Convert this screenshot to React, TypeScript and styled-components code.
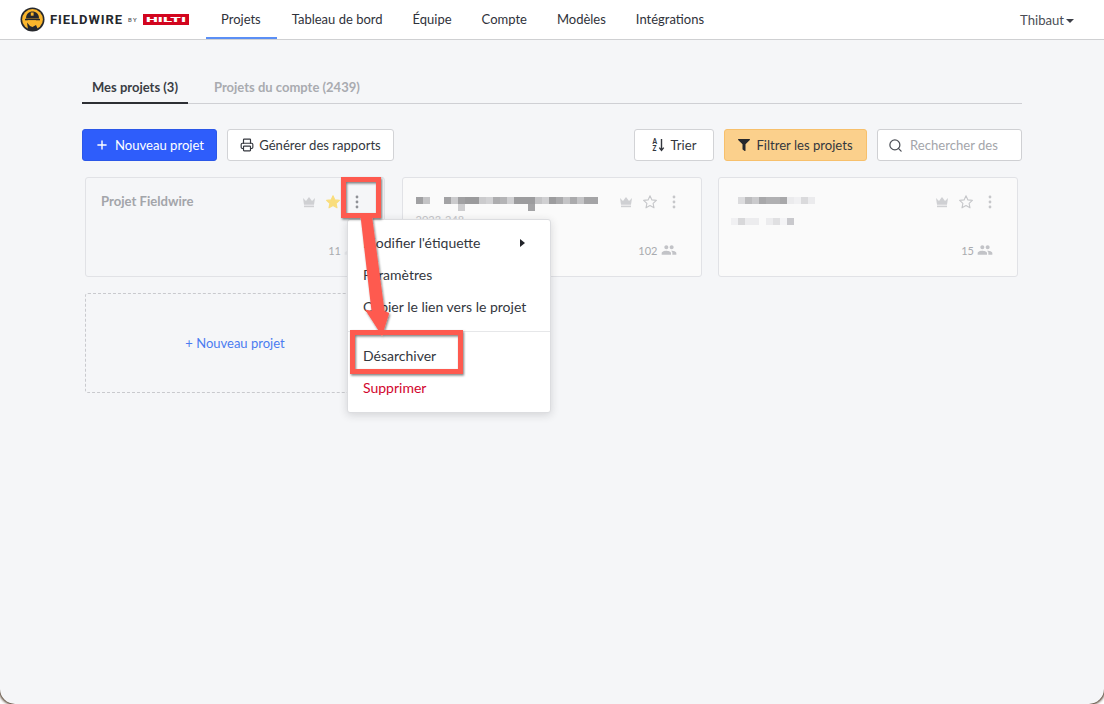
import React from 'react'
import styled, { createGlobalStyle } from 'styled-components'
import { Plus, Printer, Search } from 'lucide-react'
import { MdPeople } from 'react-icons/md'
import { FaFilter } from 'react-icons/fa'

const GlobalStyle = createGlobalStyle`
  html, body {
    margin: 0;
    background: #fff;
    overflow: hidden;
  }
  * { box-sizing: border-box; }
`

const NAV_ITEMS = ['Projets', 'Tableau de bord', 'Équipe', 'Compte', 'Modèles', 'Intégrations']

const CARD2_ROW1 = ['#a0a0a2', '#c4c4c6', 0, 0, '#a2a2a4', '#cbcbcd', '#a0a0a2', '#9a9a9c', '#9a9a9c', '#cbcbcd', '#d2d2d4', '#adadaf', '#b4b4b6', '#d0d0d2', '#9c9c9e', '#9c9c9e', '#9c9c9e', '#c4c4c6', '#d0d0d2', '#9c9c9e', '#aaaaac', '#c4c4c6', '#aaaaac', '#c4c4c6', '#a4a4a6', '#a4a4a6']
const CARD2_ROW2 = [0, 0, 0, 0, 0, 0, '#cdcdcf', 0, 0, 0, 0, 0, 0, 0, 0, 0, '#a4a4a6']
const CARD3_ROW1 = ['#dcdcde', '#bcbcbe', '#cacacc', '#a8a8aa', '#b0b0b2', '#b0b0b2', '#a8a8aa', '#ebebed', '#f0f0f2', '#dadadc', '#ebebed']
const CARD3_ROW2 = ['#f0f0f2', '#d8d8da', '#ececee', '#ececee', 0, '#ececee', '#e0e0e2', '#f4f4f6', '#c9c9cd']

const Page = styled.div`
  position: relative;
  width: 1104px;
  height: 704px;
  overflow: hidden;
  background: #f5f6f8;
  border-radius: 0 0 15px 15px;
  box-shadow: 0 0 3px 1px #2c1500;
  font-family: Lato, sans-serif;
  font-size: 13px;
  color: #34373e;
`

const Header = styled.header`
  display: flex;
  align-items: stretch;
  height: 40px;
  background: #fff;
  border-bottom: 1px solid #cfd0d2;
  padding: 0 30px 0 20px;
`

const Brand = styled.div`
  display: flex;
  align-items: center;
  width: 186px;
`

const Wordmark = styled.span`
  margin-left: 5px;
  font-family: Roboto, sans-serif;
  font-weight: 700;
  font-size: 13px;
  letter-spacing: 0.95px;
  color: #26282d;
`

const ByMark = styled.span`
  margin: 0 5px 0 5px;
  font-family: Roboto, sans-serif;
  font-size: 6px;
  font-weight: 500;
  letter-spacing: 1.2px;
  color: #55585e;
`

const Nav = styled.nav`
  display: flex;
  flex: 1;
`

const NavItem = styled.a<{ $active?: boolean }>`
  display: flex;
  align-items: center;
  height: 39px;
  padding: 0 ${(p) => (p.$active ? '16px' : '15px')} 0 15px;
  color: #2f323a;
  border-bottom: 2px solid ${(p) => (p.$active ? '#5b8ff5' : 'transparent')};
`

const UserMenu = styled.div`
  display: flex;
  align-items: center;
  gap: 2px;
  font-size: 13.1px;
  color: #4a4d55;
`

const Caret = styled.i`
  width: 0;
  height: 0;
  margin-top: 2px;
  border-left: 4px solid transparent;
  border-right: 4px solid transparent;
  border-top: 4px solid #3c3f47;
`

const Content = styled.main`
  padding: 32px 82px 0;
`

const Tabs = styled.div`
  display: flex;
  gap: 16px;
  height: 32px;
  border-bottom: 1px solid #cfd0d4;
`

const Tab = styled.div<{ $active?: boolean }>`
  height: 32px;
  padding: 0 10px;
  line-height: 31px;
  font-weight: 700;
  color: ${(p) => (p.$active ? '#3a3d44' : '#a9abb0')};
  border-bottom: ${(p) => (p.$active ? '2px solid #2d2f34' : 'none')};
`

const Toolbar = styled.div`
  display: flex;
  gap: 10px;
  margin-top: 25px;
`

const Spacer = styled.div`
  flex: 1;
`

const Button = styled.button<{ $variant?: 'primary' | 'filter'; $w: number }>`
  display: flex;
  align-items: center;
  justify-content: center;
  gap: ${(p) => (p.$variant ? '6px' : '5px')};
  height: 32px;
  width: ${(p) => p.$w}px;
  padding: 0;
  font: inherit;
  font-size: 13.1px;
  border-radius: 3px;
  border: 1px solid
    ${(p) =>
      p.$variant === 'primary' ? '#2b57e8' : p.$variant === 'filter' ? '#f7c06c' : '#d2d3d6'};
  background: ${(p) =>
    p.$variant === 'primary' ? '#2e5dfb' : p.$variant === 'filter' ? '#fbd08c' : '#fff'};
  color: ${(p) => (p.$variant === 'primary' ? '#fff' : '#34373e')};
`

const SearchBox = styled.label`
  display: flex;
  align-items: center;
  gap: 7px;
  width: 145px;
  height: 32px;
  padding: 0 10px;
  background: #fff;
  border: 1px solid #cfd0d3;
  border-radius: 3px;
`

const SearchInput = styled.input`
  flex: 1;
  min-width: 0;
  border: none;
  outline: none;
  padding: 0;
  font: inherit;
  font-size: 13.1px;
  background: transparent;
  &::placeholder {
    color: #a3a5aa;
    opacity: 1;
  }
`

const Grid = styled.div`
  display: grid;
  grid-template-columns: repeat(3, 300px);
  grid-auto-rows: 100px;
  column-gap: 16.5px;
  row-gap: 16px;
  margin: 16px 0 0 3px;
`

const Card = styled.div<{ $archived?: boolean }>`
  position: relative;
  padding: 15px 15px 0 15px;
  background: ${(p) => (p.$archived ? '#f5f6f8' : '#fafafa')};
  border: 1px solid #e1e2e6;
  border-radius: 3px;
`

const CardTop = styled.div`
  display: flex;
  justify-content: space-between;
  height: 18px;
`

const CardTitle = styled.div`
  margin-top: -1px;
  font-size: 13.1px;
  font-weight: 700;
  line-height: 18px;
  color: #a3a5aa;
`

const BlurLines = styled.div`
  display: flex;
  flex-direction: column;
  padding-top: 4px;
`

const BlurRow = styled.div<{ $offset?: number; $top?: number }>`
  display: flex;
  margin-left: ${(p) => p.$offset ?? 0}px;
  margin-top: ${(p) => p.$top ?? 0}px;
`

const BlurBlock = styled.i<{ $color: string | number }>`
  display: block;
  width: 7px;
  height: 7px;
  background: ${(p) => p.$color || 'transparent'};
`

const CardIcons = styled.div`
  display: flex;
  align-items: center;
`

const IconSlot = styled.span`
  display: flex;
  align-items: center;
  justify-content: center;
  width: 24px;
`

const CardCode = styled.div`
  margin: 3px 0 0 -2px;
  font-size: 11px;
  line-height: 12px;
  color: #c4c5c9;
`

const CardFooter = styled.div`
  position: absolute;
  right: 24px;
  bottom: 18px;
  display: flex;
  align-items: center;
  gap: 3px;
  font-size: 11px;
  color: #a9abaf;
`

const NewCard = styled.div`
  display: flex;
  align-items: center;
  justify-content: center;
  border: 1px dashed #c9cace;
  border-radius: 3px;
  color: #4b7cf0;
`

const Menu = styled.div`
  position: absolute;
  z-index: 5;
  top: 41px;
  left: 261px;
  width: 204px;
  padding: 7px 0 8px;
  background: #fff;
  border: 1px solid #dcdde0;
  border-radius: 3px;
  box-shadow: 0 2px 8px rgba(30, 33, 40, 0.16);
`

const MenuItem = styled.div<{ $danger?: boolean }>`
  display: flex;
  align-items: center;
  justify-content: space-between;
  height: 32px;
  padding: 0 25px 2px 15px;
  white-space: nowrap;
  font-size: 14px;
  color: ${(p) => (p.$danger ? '#d2042d' : '#34373e')};
`

const MenuCaret = styled.i`
  width: 0;
  height: 0;
  margin-top: 2px;
  border-top: 4.5px solid transparent;
  border-bottom: 4.5px solid transparent;
  border-left: 5px solid #22242a;
`

const MenuDivider = styled.hr`
  height: 1px;
  margin: 8px 0;
  border: none;
  background: #e6e7e9;
`

const Annotations = styled.svg`
  position: absolute;
  z-index: 10;
  top: 0;
  left: 0;
  pointer-events: none;
`

const Logo = () => (
  <svg width="25" height="25" viewBox="0 0 25 25">
    <circle cx="12.5" cy="12.5" r="12" fill="#26282d" />
    <circle cx="12.5" cy="12.5" r="10.4" fill="#fbb62c" />
    <path d="M6 11.5C6 7 9 4.6 12.5 4.6S19 7 19 11.5z" fill="#26282d" />
    <path d="M10.8 5.5h2.8v3.2h-2.8z" fill="#fbb62c" />
    <path d="M5 11.8h15v1.5H5z" fill="#26282d" />
    <path d="M7.5 13.3h8.5l-.5 4-3 1.6-2-1-1-2.2z" fill="#fbb62c" />
    <path d="M7 15.5l3 3.4 2.5 1.2 3.5-2 2 4.3c-3 1.6-7 1.6-10 0z" fill="#26282d" />
  </svg>
)

const HiltiLogo = () => (
  <svg width="46" height="11" viewBox="0 0 46 11">
    <rect width="46" height="11" fill="#d2051e" />
    <text
      x="3"
      y="8"
      fontFamily="Roboto, sans-serif"
      fontWeight="900"
      fontSize="7"
      fill="#fff"
      textLength="40"
      lengthAdjust="spacingAndGlyphs"
    >
      HILTI
    </text>
  </svg>
)

const CrownIcon = () => (
  <svg width="14" height="14" viewBox="0 0 14 14" fill="#cfd0d3">
    <path d="M1 3l3 3 3-4 3 4 3-3-1 6.8H2z" />
    <rect x="2" y="10.6" width="10" height="1.6" />
  </svg>
)

const StarIcon = ({ filled }: { filled?: boolean }) => (
  <svg width="16" height="16" viewBox="0 0 16 16">
    <path
      d="M8 1.8l1.9 4.1 4.5.5-3.3 3 .9 4.4L8 11.6l-4 2.2.9-4.4-3.3-3 4.5-.5z"
      fill={filled ? '#f9dd7c' : 'none'}
      stroke={filled ? '#f9dd7c' : '#c6c7ca'}
      strokeWidth="1.1"
      strokeLinejoin="round"
    />
  </svg>
)

const DotsIcon = ({ color }: { color: string }) => (
  <svg width="8" height="14" viewBox="0 0 8 14" fill={color}>
    <circle cx="4" cy="2" r="1.4" />
    <circle cx="4" cy="7" r="1.4" />
    <circle cx="4" cy="12" r="1.4" />
  </svg>
)

const SortIcon = () => (
  <svg width="14" height="14" viewBox="0 0 14 14">
    <text x="0.5" y="6" fontFamily="Lato, sans-serif" fontWeight="900" fontSize="6.5" fill="#34373e">
      A
    </text>
    <text x="0.5" y="13" fontFamily="Lato, sans-serif" fontWeight="900" fontSize="6.5" fill="#34373e">
      Z
    </text>
    <path d="M9.5 1v11M7.3 9.6l2.2 2.8 2.2-2.8" fill="none" stroke="#34373e" strokeWidth="1.4" />
  </svg>
)

const Blur = ({ colors, offset, top }: { colors: (string | number)[]; offset?: number; top?: number }) => (
  <BlurRow $offset={offset} $top={top}>
    {colors.map((c, i) => (
      <BlurBlock key={i} $color={c} />
    ))}
  </BlurRow>
)

const Members = ({ count, faint }: { count: number; faint?: boolean }) => (
  <CardFooter>
    {count}
    <MdPeople size={16} color={faint ? '#e8e9ec' : '#c2c3c7'} />
  </CardFooter>
)

const CardActions = ({ starred, dots }: { starred?: boolean; dots: string }) => (
  <CardIcons>
    <IconSlot>
      <CrownIcon />
    </IconSlot>
    <IconSlot>
      <StarIcon filled={starred} />
    </IconSlot>
    <IconSlot>
      <DotsIcon color={dots} />
    </IconSlot>
  </CardIcons>
)

const App: React.FC = () => {
  return (
    <Page>
      <GlobalStyle />
      <Header>
        <Brand>
          <Logo />
          <Wordmark>FIELDWIRE</Wordmark>
          <ByMark>BY</ByMark>
          <HiltiLogo />
        </Brand>
        <Nav>
          {NAV_ITEMS.map((item, i) => (
            <NavItem key={item} $active={i === 0}>
              {item}
            </NavItem>
          ))}
        </Nav>
        <UserMenu>
          Thibaut
          <Caret />
        </UserMenu>
      </Header>

      <Content>
        <Tabs>
          <Tab $active>Mes projets (3)</Tab>
          <Tab>Projets du compte (2439)</Tab>
        </Tabs>

        <Toolbar>
          <Button $variant="primary" $w={135}>
            <Plus size={14} strokeWidth={2.4} />
            Nouveau projet
          </Button>
          <Button $w={167}>
            <Printer size={14} strokeWidth={2} />
            Générer des rapports
          </Button>
          <Spacer />
          <Button $w={80}>
            <SortIcon />
            Trier
          </Button>
          <Button $variant="filter" $w={143}>
            <FaFilter size={12} color="#26282d" />
            Filtrer les projets
          </Button>
          <SearchBox>
            <Search size={15} color="#4d5057" />
            <SearchInput placeholder="Rechercher des" />
          </SearchBox>
        </Toolbar>

        <Grid>
          <Card $archived>
            <CardTop>
              <CardTitle>Projet Fieldwire</CardTitle>
              <CardActions starred dots="#8f9196" />
            </CardTop>
            <Members count={11} faint />
            <Menu>
              <MenuItem>
                Modifier l'étiquette
                <MenuCaret />
              </MenuItem>
              <MenuItem>Paramètres</MenuItem>
              <MenuItem>Copier le lien vers le projet</MenuItem>
              <MenuDivider />
              <MenuItem>Désarchiver</MenuItem>
              <MenuItem $danger>Supprimer</MenuItem>
            </Menu>
          </Card>

          <Card>
            <CardTop>
              <BlurLines>
                <Blur colors={CARD2_ROW1} offset={-2} />
                <Blur colors={CARD2_ROW2} offset={-2} />
                <CardCode>2023-248</CardCode>
              </BlurLines>
              <CardActions dots="#c6c7ca" />
            </CardTop>
            <Members count={102} />
          </Card>

          <Card>
            <CardTop>
              <BlurLines>
                <Blur colors={CARD3_ROW1} offset={4} />
              </BlurLines>
              <CardActions dots="#c6c7ca" />
            </CardTop>
            <Blur colors={CARD3_ROW2} offset={-3} top={7} />
            <Members count={15} />
          </Card>

          <NewCard>+ Nouveau projet</NewCard>
        </Grid>
      </Content>

      <Annotations width="1104" height="704" viewBox="0 0 1104 704">
        <defs>
          <filter id="annotation-shadow" x="-20%" y="-20%" width="140%" height="140%">
            <feDropShadow dx="1" dy="1.5" stdDeviation="1.2" floodColor="#000" floodOpacity="0.5" />
          </filter>
        </defs>
        <g filter="url(#annotation-shadow)" fill="#fe5a50">
          <path d="M360.5 216H372L384.5 311L389.3 313L382 336L365 309.5L371.5 311z" />
          <path fillRule="evenodd" d="M341 177h40v41h-40zM346 182v31h30v-31z" />
          <path fillRule="evenodd" d="M350 330h113v44h-113zM355 335v34h103v-34z" />
        </g>
      </Annotations>
    </Page>
  )
}

export default App
